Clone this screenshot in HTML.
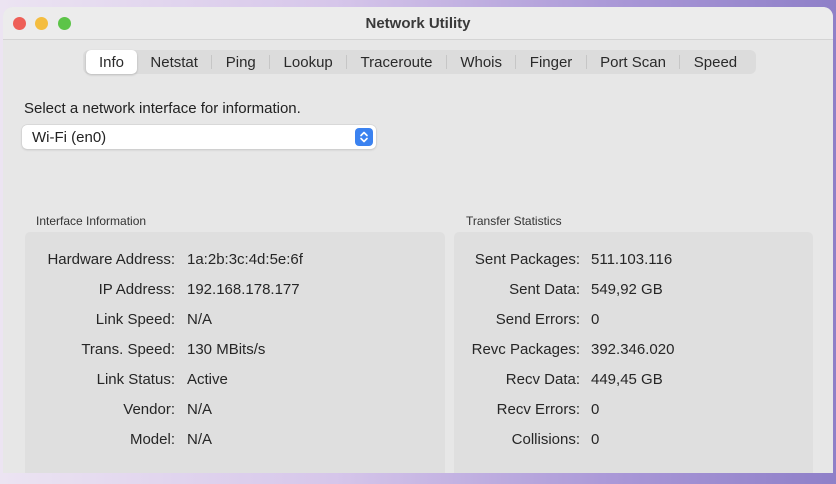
<!DOCTYPE html>
<html><head><style>
*{margin:0;padding:0;box-sizing:border-box}
body{width:836px;height:484px;overflow:hidden;font-family:"Liberation Sans",sans-serif;background:linear-gradient(90deg,#ece4f2 0%,#d6c6ea 40%,#a896d6 75%,#8f80c8 100%);position:relative}
.win{position:absolute;left:3px;top:7px;width:830px;height:466px;background:#e7e7e7;border-radius:10px 10px 0 0;overflow:hidden}
.tb{height:33px;background:#ececec;border-bottom:1px solid #d4d4d4;position:relative}
.dot{position:absolute;top:10px;width:13px;height:13px;border-radius:50%}
.title{position:absolute;left:0;right:0;top:8px;text-align:center;font-weight:bold;font-size:15px;color:#3a3a3a}
.tabs{position:absolute;left:80px;top:43px;width:673px;height:24px;background:#dcdcdc;border-radius:6px;display:flex;align-items:center;font-size:15px;color:#2a2a2a}
.tab{padding:0 13.4px;position:relative;height:24px;line-height:25px}
.tab.sel{background:#fff;border-radius:5px;box-shadow:0 1px 2px rgba(0,0,0,.2);margin-left:3px;padding:0 13px}
.sep{width:1px;height:14px;background:#c6c6c6}
.t{position:absolute;font-size:15px;color:#222}
.sel2{position:absolute;left:19px;top:118px;width:354px;height:24px;background:#fff;border-radius:5px;box-shadow:0 0 0 .5px #ccc,0 1px 2px rgba(0,0,0,.15);font-size:15px;line-height:26px;padding-left:10px;color:#222}
.arr{position:absolute;right:3px;top:3px;width:18px;height:18px;border-radius:4px;background:#3b82f0}
.panel{position:absolute;top:225px;height:250px;background:#dfdfdf;border-radius:5px}
.hd{position:absolute;top:207px;font-size:12px;color:#333}
.row{position:absolute;font-size:15px;color:#262626;white-space:nowrap}
.row .l{position:absolute;right:0;text-align:right}
</style></head><body>
<div class="win">
 <div class="tb">
  <div class="dot" style="left:10px;background:#ee5f57"></div>
  <div class="dot" style="left:32px;background:#f4bd3f"></div>
  <div class="dot" style="left:55px;background:#5cc448"></div>
  <div class="title">Network Utility</div>
 </div>
 <div class="tabs">
  <div class="tab sel">Info</div><div class="tab">Netstat</div><div class="sep"></div><div class="tab">Ping</div><div class="sep"></div><div class="tab">Lookup</div><div class="sep"></div><div class="tab">Traceroute</div><div class="sep"></div><div class="tab">Whois</div><div class="sep"></div><div class="tab">Finger</div><div class="sep"></div><div class="tab">Port Scan</div><div class="sep"></div><div class="tab">Speed</div>
 </div>
 <div class="t" style="left:21px;top:93px">Select a network interface for information.</div>
 <div class="sel2">Wi-Fi (en0)<div class="arr"><svg width="18" height="18" viewBox="0 0 18 18"><path d="M6 7.5L9 4.5L12 7.5M6 10.5L9 13.5L12 10.5" stroke="#fff" stroke-width="1.6" fill="none" stroke-linecap="round" stroke-linejoin="round"/></svg></div></div>
 <div class="hd" style="left:33px">Interface Information</div>
 <div class="hd" style="left:463px">Transfer Statistics</div>
 <div class="panel" style="left:22px;width:420px"></div>
 <div class="panel" style="left:451px;width:359px"></div>
</div>
<div style="position:absolute;left:0;top:1px">
 <div class="row" style="left:0;top:250px;width:175px"><span class="l">Hardware Address:</span></div><div class="row" style="left:187px;top:250px">1a:2b:3c:4d:5e:6f</div>
 <div class="row" style="left:0;top:280px;width:175px"><span class="l">IP Address:</span></div><div class="row" style="left:187px;top:280px">192.168.178.177</div>
 <div class="row" style="left:0;top:310px;width:175px"><span class="l">Link Speed:</span></div><div class="row" style="left:187px;top:310px">N/A</div>
 <div class="row" style="left:0;top:340px;width:175px"><span class="l">Trans. Speed:</span></div><div class="row" style="left:187px;top:340px">130 MBits/s</div>
 <div class="row" style="left:0;top:370px;width:175px"><span class="l">Link Status:</span></div><div class="row" style="left:187px;top:370px">Active</div>
 <div class="row" style="left:0;top:400px;width:175px"><span class="l">Vendor:</span></div><div class="row" style="left:187px;top:400px">N/A</div>
 <div class="row" style="left:0;top:430px;width:175px"><span class="l">Model:</span></div><div class="row" style="left:187px;top:430px">N/A</div>

 <div class="row" style="left:0;top:250px;width:580px"><span class="l">Sent Packages:</span></div><div class="row" style="left:591px;top:250px">511.103.116</div>
 <div class="row" style="left:0;top:280px;width:580px"><span class="l">Sent Data:</span></div><div class="row" style="left:591px;top:280px">549,92 GB</div>
 <div class="row" style="left:0;top:310px;width:580px"><span class="l">Send Errors:</span></div><div class="row" style="left:591px;top:310px">0</div>
 <div class="row" style="left:0;top:340px;width:580px"><span class="l">Revc Packages:</span></div><div class="row" style="left:591px;top:340px">392.346.020</div>
 <div class="row" style="left:0;top:370px;width:580px"><span class="l">Recv Data:</span></div><div class="row" style="left:591px;top:370px">449,45 GB</div>
 <div class="row" style="left:0;top:400px;width:580px"><span class="l">Recv Errors:</span></div><div class="row" style="left:591px;top:400px">0</div>
 <div class="row" style="left:0;top:430px;width:580px"><span class="l">Collisions:</span></div><div class="row" style="left:591px;top:430px">0</div>
</div>
</body></html>
